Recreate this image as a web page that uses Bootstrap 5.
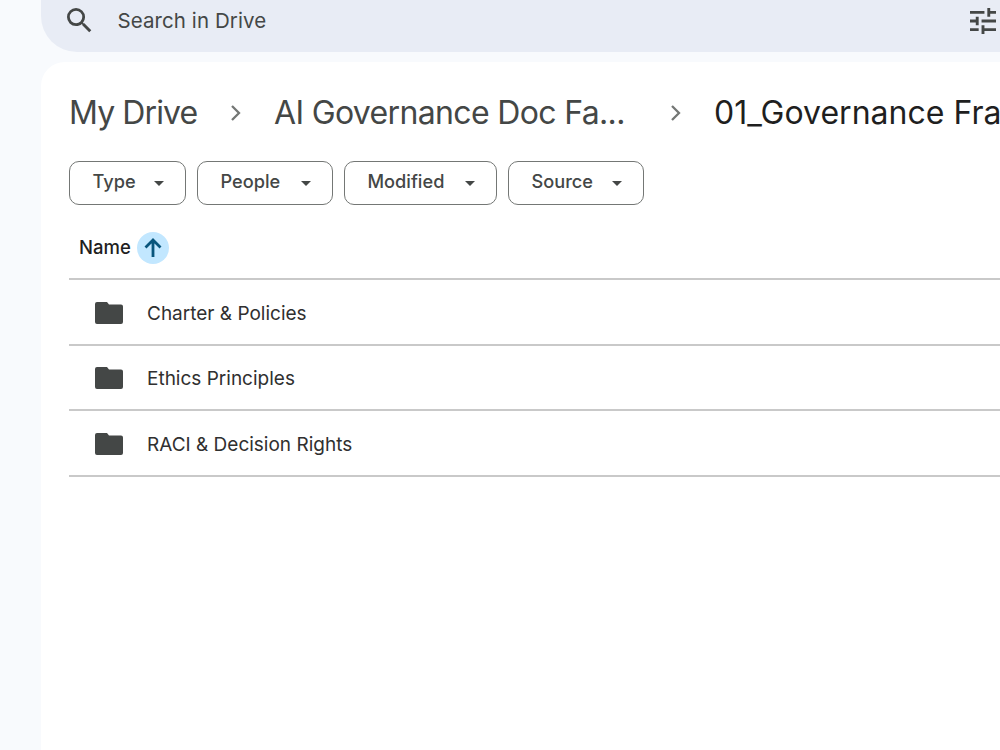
<!DOCTYPE html>
<html lang="en">
<head>
<meta charset="utf-8">
<meta name="viewport" content="width=device-width, initial-scale=1">
<title>Drive</title>
<link href="https://cdn.jsdelivr.net/npm/bootstrap@5.3.0/dist/css/bootstrap.min.css" rel="stylesheet">
<style>
body{background:#f8fafd;font-family:Inter,Roboto,sans-serif;color:#1f1f1f;height:750px;overflow:hidden}
svg{display:block;flex:none}
.shell{margin-left:41px;width:959px}
.searchbar{height:52px;width:1000px;background:#e8ecf5;border-radius:0 0 36px 36px;padding:0 0 11px 26px;color:#444746;font-size:20.5px;letter-spacing:.08px}
.search-label{width:852px;margin-left:25.5px;padding-top:2px}
.panel{margin-top:10px;width:1000px;height:688px;border-radius:24px 0 0 0;padding-left:28px}
.crumbs{height:99px;padding-top:2px;font-size:32px;color:#444746;white-space:nowrap;letter-spacing:-.65px}
.crumbs span{flex:none}
.c1{width:161px;letter-spacing:-.9px}
.c2{width:428px;padding-left:32px}
.crumbs .current{color:#1f1f1f;padding-left:32px;letter-spacing:.02px}
.chips{height:44px;gap:11px}
.chip{height:44px;border:1.5px solid #747775;border-radius:10px;color:#444746;font-size:18.2px;font-weight:500;padding:0 21px 3px 22.5px}
.chip svg{margin-top:4px}
.chip-s{width:117px}.chip-m{width:136px}.chip-l{width:153px}
.heading{height:75px;padding:13px 0 0 10px;font-size:18.5px;font-weight:500;border-bottom:2px solid #c9c9c9}
.sort{width:32px;height:32px;background:#c2e7ff;margin-left:6px}
.entry{border-bottom:2px solid #c9c9c9;height:65.6px;padding:2px 0 0 26px;font-size:19px;color:#303030}
.entry svg{margin-right:24px}
.entry span{padding-top:2px}
</style>
</head>
<body>
<div class="shell">
  <header class="searchbar d-flex align-items-center">
    <svg width="25" height="25" viewBox="3 3 18 18" fill="#444746"><path d="M15.5 14h-.79l-.28-.27A6.47 6.47 0 0 0 16 9.500 6.500 6.500 0 1 0 9.500 16c1.610 0 3.090-.59 4.230-1.570l.27.28v.79l5 4.990L20.490 19zm-6 0a4.500 4.500 0 1 1 0-9 4.500 4.500 0 0 1 0 9"/></svg>
    <span class="search-label text-nowrap">Search in Drive</span>
    <svg width="26" height="26" viewBox="3 3 18 18" fill="#444746"><path d="M3 17v2h6v-2zM3 5v2h10V5zm10 16v-2h8v-2h-8v-2h-2v6zM7 9v2H3v2h4v2h2V9zm14 4v-2H11v2zm-6-4h2V7h4V5h-4V3h-2z"/></svg>
  </header>
  <main class="panel bg-white">
    <nav class="crumbs d-flex align-items-center">
      <span class="c1">My Drive</span>
      <svg width="12" height="18" viewBox="0 0 12 18" fill="none" stroke="#747775" stroke-width="2.300"><path d="M2 2l7 7-7 7"/></svg>
      <span class="c2">AI Governance Doc Fa...</span>
      <svg width="12" height="18" viewBox="0 0 12 18" fill="none" stroke="#747775" stroke-width="2.300"><path d="M2 2l7 7-7 7"/></svg>
      <span class="current">01_Governance Framework</span>
    </nav>
    <div class="chips d-flex">
      <div class="chip chip-s d-flex align-items-center justify-content-between"><span>Type</span><svg width="10" height="5" viewBox="0 0 10 5"><path d="M0 0h10L5 5z" fill="#444746"/></svg></div>
      <div class="chip chip-m d-flex align-items-center justify-content-between"><span>People</span><svg width="10" height="5" viewBox="0 0 10 5"><path d="M0 0h10L5 5z" fill="#444746"/></svg></div>
      <div class="chip chip-l d-flex align-items-center justify-content-between"><span>Modified</span><svg width="10" height="5" viewBox="0 0 10 5"><path d="M0 0h10L5 5z" fill="#444746"/></svg></div>
      <div class="chip chip-m d-flex align-items-center justify-content-between"><span>Source</span><svg width="10" height="5" viewBox="0 0 10 5"><path d="M0 0h10L5 5z" fill="#444746"/></svg></div>
    </div>
    <div class="heading d-flex align-items-center"><span>Name</span>
      <span class="sort rounded-circle d-flex align-items-center justify-content-center"><svg width="18" height="20" viewBox="0 0 18 20" fill="none" stroke="#08557c" stroke-width="2.800"><path d="M9 19V3M1.500 9.500L9 2l7.500 7.500"/></svg></span>
    </div>
    <div class="entry d-flex align-items-center"><svg width="28" height="22" viewBox="0 0 28 22"><path d="M2 0h10l2 2.500h12q2 0 2 2V20q0 2-2 2H2q-2 0-2-2V2q0-2 2-2" fill="#444746"/></svg><span>Charter &amp; Policies</span></div>
    <div class="entry d-flex align-items-center"><svg width="28" height="22" viewBox="0 0 28 22"><path d="M2 0h10l2 2.500h12q2 0 2 2V20q0 2-2 2H2q-2 0-2-2V2q0-2 2-2" fill="#444746"/></svg><span>Ethics Principles</span></div>
    <div class="entry d-flex align-items-center"><svg width="28" height="22" viewBox="0 0 28 22"><path d="M2 0h10l2 2.500h12q2 0 2 2V20q0 2-2 2H2q-2 0-2-2V2q0-2 2-2" fill="#444746"/></svg><span>RACI &amp; Decision Rights</span></div>
  </main>
</div>
<script src="https://cdn.jsdelivr.net/npm/bootstrap@5.3.0/dist/js/bootstrap.bundle.min.js"></script>
</body>
</html>
